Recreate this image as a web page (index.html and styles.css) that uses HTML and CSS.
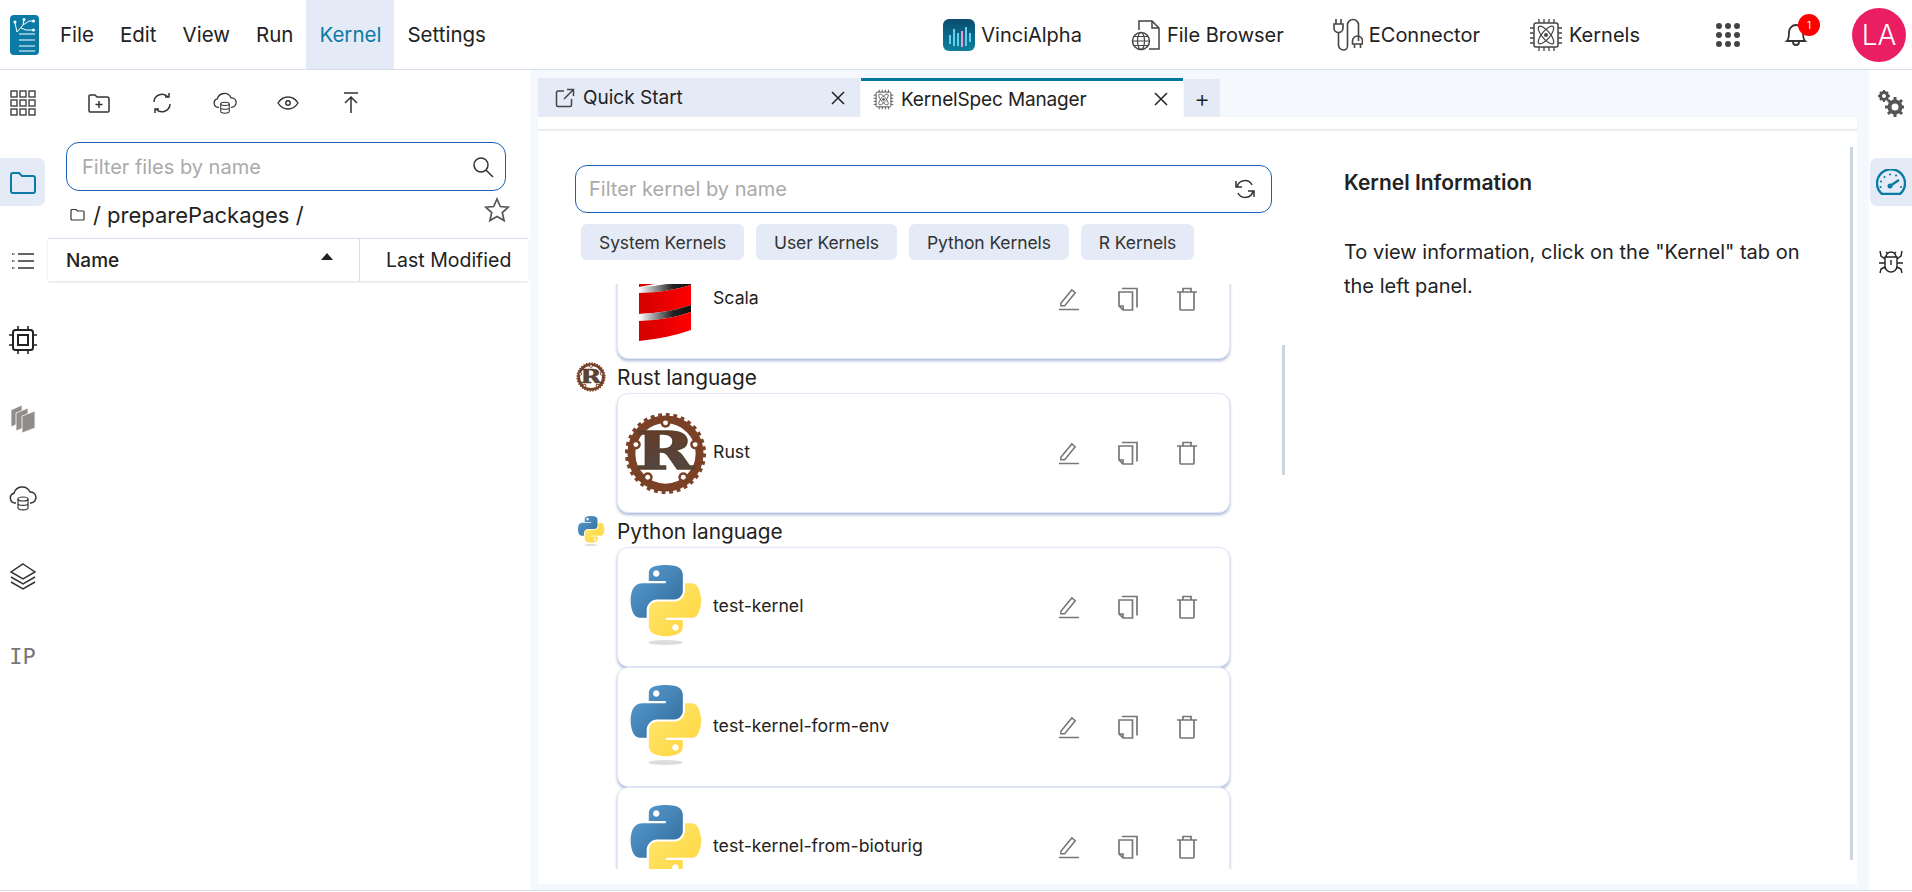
FILE: index.html
```html
<!DOCTYPE html>
<html>
	<head>
		<meta charset="utf-8">
		<title>KernelSpec Manager</title>
		<link rel="stylesheet" href="styles.css">
	</head>
	<body>
		<svg class="defs" width="0" height="0">
			<defs>
				<linearGradient id="py_blue" x1="0" y1="0" x2="1" y2="1"><stop offset="0" stop-color="#5a9fd4"/><stop offset="1" stop-color="#306998"/></linearGradient>
				<linearGradient id="py_yellow" x1="0" y1="0" x2="1" y2="1"><stop offset="0" stop-color="#ffe873"/><stop offset="1" stop-color="#ffd43b"/></linearGradient>
				<linearGradient id="rust_r" x1="0" y1="0" x2="0" y2="1"><stop offset="0" stop-color="#6b3a22"/><stop offset="1" stop-color="#4a4a4a"/></linearGradient>
				<linearGradient id="scala_red" x1="0" y1="0" x2="1" y2="0"><stop offset="0" stop-color="#d40000"/><stop offset="1" stop-color="#ff0000"/></linearGradient>
				<linearGradient id="scala_dark" x1="0" y1="0" x2="1" y2="0"><stop offset="0" stop-color="#ffffff"/><stop offset=".35" stop-color="#888"/><stop offset=".65" stop-color="#222"/><stop offset="1" stop-color="#111"/></linearGradient>
				<symbol id="python" viewBox="0 0 110 126">
					<path fill="url(#py_blue)" fill-rule="evenodd" d="M54.919 0.001c-4.584.022-8.961.413-12.813 1.095C30.76 3.099 28.7 7.295 28.7 15.032v10.219h26.813v3.406H18.638c-7.793 0-14.616 4.684-16.75 13.594-2.462 10.213-2.571 16.586 0 27.25 1.906 7.938 6.458 13.594 14.25 13.594h9.219v-12.25c0-8.85 7.657-16.656 16.75-16.656h26.781c7.454 0 13.406-6.138 13.406-13.625v-25.531c0-7.266-6.13-12.725-13.406-13.937C64.282.328 59.502-.02 54.919.001zm-14.5 8.219c2.77 0 5.031 2.299 5.031 5.125 0 2.816-2.262 5.094-5.031 5.094-2.78 0-5.031-2.278-5.031-5.094 0-2.826 2.251-5.125 5.031-5.125z"/>
					<path fill="url(#py_yellow)" fill-rule="evenodd" d="M85.638 28.657v11.906c0 9.231-7.826 17-16.75 17H42.106c-7.336 0-13.406 6.278-13.406 13.625v25.531c0 7.266 6.319 11.54 13.406 13.625 8.487 2.496 16.626 2.947 26.781 0 6.75-1.954 13.406-5.888 13.406-13.625v-10.219H55.513v-3.406h40.188c7.793 0 10.696-5.436 13.406-13.594 2.8-8.399 2.68-16.476 0-27.25-1.926-7.757-5.604-13.594-13.406-13.594h-10.063zm-15.063 64.656c2.78 0 5.031 2.278 5.031 5.094 0 2.826-2.252 5.125-5.031 5.125-2.77 0-5.031-2.299-5.031-5.125 0-2.816 2.262-5.094 5.031-5.094z"/>
					<ellipse cx="55" cy="122" rx="27" ry="4" fill="#ddd"/>
				</symbol>
				<symbol id="rust" viewBox="0 0 84 84">
					<circle cx="42" cy="42" r="34.500" fill="none" stroke="#7a4126" stroke-width="8"/>
					<circle cx="42" cy="42" r="38.500" fill="none" stroke="#7a4126" stroke-width="5" stroke-dasharray="3.780 3.780"/>
					<g fill="#7a4126"><circle cx="42" cy="11" r="5"/><circle cx="12" cy="33" r="5"/><circle cx="72" cy="33" r="5"/><circle cx="24" cy="66" r="5"/><circle cx="60" cy="66" r="5"/></g>
					<g fill="#fff"><circle cx="42" cy="11" r="2.500"/><circle cx="12" cy="33" r="2.500"/><circle cx="72" cy="33" r="2.500"/><circle cx="24" cy="66" r="2.500"/><circle cx="60" cy="66" r="2.500"/></g>
					<text x="12" y="58" textLength="59" lengthAdjust="spacingAndGlyphs" font-family="DejaVu Serif" font-weight="700" font-size="52" fill="url(#rust_r)" stroke="#57402f" stroke-width="1.400">R</text>
				</symbol>
				<symbol id="edit" viewBox="0 0 24 24"><path d="M4 16.500 15.500 2.500l3.500 3L8 19H4z M2 23h21" fill="none" stroke="#777" stroke-width="1.600"/></symbol>
				<symbol id="copy" viewBox="0 0 22 24"><path d="M5 1.500h15v19 M2 5h13.500v18H6l-4-4z M2 19h4v4" fill="none" stroke="#777" stroke-width="1.700"/></symbol>
				<symbol id="trash" viewBox="0 0 22 24"><path d="M1 5h20M4 5v17a1 1 0 0 0 1 1h12a1 1 0 0 0 1-1V5M7 5V1.500h8V5" fill="none" stroke="#777" stroke-width="1.700"/></symbol>
				<symbol id="cloud_db" viewBox="0 0 28 28"><path d="M7 19H6a5 5 0 0 1-1-9.800A8.500 8.500 0 0 1 21 8a5.500 5.500 0 0 1 1 11h-1" fill="none" stroke="#333" stroke-width="1.500"/><ellipse cx="14" cy="15" rx="5" ry="2" fill="none" stroke="#333" stroke-width="1.200"/><path d="M9 15v9c0 2.500 10 2.500 10 0v-9M9 19.500c0 2.500 10 2.500 10 0" fill="none" stroke="#333" stroke-width="1.200"/></symbol>
				<symbol id="chip_atom" viewBox="0 0 34 34"><rect x="5" y="5" width="24" height="24" rx="2" fill="none" stroke="#444" stroke-width="1.500"/><path d="M10 1v4M15 1v4M20 1v4M25 1v4M10 29v4M15 29v4M20 29v4M25 29v4M1 10h4M1 15h4M1 20h4M1 25h4M29 10h4M29 15h4M29 20h4M29 25h4" stroke="#444" stroke-width="1.300"/><ellipse cx="17" cy="17" rx="4" ry="11" transform="rotate(40 17 17)" fill="none" stroke="#444" stroke-width="1.200"/><ellipse cx="17" cy="17" rx="4" ry="11" transform="rotate(-40 17 17)" fill="none" stroke="#444" stroke-width="1.200"/><circle cx="17" cy="17" r="2" fill="#444"/></symbol>
			</defs>
		</svg>

		<header class="topbar">
			<svg class="logo" viewBox="0 0 29 40">
				<rect width="29" height="40" rx="4" fill="#0b7aa5"/>
				<path d="M7 17 13 10 14 5M13 10l6-4h4M11 13l5 2h7M7 17 5 8" fill="none" stroke="#fff" stroke-width="1"/>
				<circle cx="14" cy="4.500" r="1.500" fill="#fff"/><circle cx="23.500" cy="6" r="1.500" fill="#fff"/><circle cx="23.500" cy="15" r="1.500" fill="#fff"/><circle cx="5" cy="7" r="1.500" fill="#fff"/>
				<path d="M9 19h16M9 25h16M9 31h16M9 36h16" fill="none" stroke="#fff" stroke-width="1.100"/>
			</svg>
			<nav class="menu">
				<a class="menu_item">File</a>
				<a class="menu_item">Edit</a>
				<a class="menu_item">View</a>
				<a class="menu_item">Run</a>
				<a class="menu_item menu_active">Kernel</a>
				<a class="menu_item">Settings</a>
			</nav>
			<nav class="apps">
				<a class="app_link">
					<svg width="32" height="32" viewBox="0 0 32 32">
						<defs><linearGradient id="vinci_bg" x1="0" y1="0" x2="0" y2="1"><stop offset="0" stop-color="#0a4c6e"/><stop offset="1" stop-color="#0f7f9e"/></linearGradient></defs>
						<rect width="32" height="32" rx="6" fill="url(#vinci_bg)"/>
						<path d="M7 16v9M11 10v17M15 14v13M23 8v19M27 14v9" stroke="#5fd0ee" stroke-width="2"/>
						<path d="M19 12v16" stroke="#f09ac8" stroke-width="2"/>
					</svg>
					VinciAlpha
				</a>
				<a class="app_link">
					<svg width="30" height="32" viewBox="0 0 30 32">
						<path d="M8 11V2h13l7 7v21H18M21 2v7h7" fill="none" stroke="#444" stroke-width="1.500"/>
						<circle cx="10" cy="22" r="8.500" fill="#fff" stroke="#444" stroke-width="1.500"/>
						<ellipse cx="10" cy="22" rx="3.500" ry="8.500" fill="none" stroke="#444" stroke-width="1.200"/>
						<path d="M1.500 22h17M3 17.500h14M3 26.500h14" stroke="#444" stroke-width="1.200"/>
					</svg>
					File Browser
				</a>
				<a class="app_link">
					<svg width="30" height="34" viewBox="0 0 30 34">
						<path d="M3 1v5M8 1v5M1 6h9v4a4 4 0 0 1-9 0zM5.500 14v13a5 5 0 0 0 5 5h0a4 4 0 0 0 4-4V7a5.500 5.500 0 0 1 11 0v16" fill="none" stroke="#444" stroke-width="1.600"/>
						<path d="M20 27a5 5 0 0 1 10 0v3H20zM22 30v4M28 30v4" fill="none" stroke="#444" stroke-width="1.600" transform="translate(-.5 -4)"/>
					</svg>
					EConnector
				</a>
				<a class="app_link">
					<svg width="34" height="34"><use href="#chip_atom"/></svg>
					Kernels
				</a>
			</nav>
			<div class="dots">
				<i></i><i></i><i></i><i></i><i></i><i></i><i></i><i></i><i></i>
			</div>
			<div class="bell">
				<svg width="24" height="28" viewBox="0 0 24 28">
					<path d="M3 20c2-2 2-5 2-9a7 7 0 0 1 14 0c0 4 0 7 2 9zM9 21a3 3 0 0 0 6 0" fill="none" stroke="#333" stroke-width="1.800"/>
				</svg>
				<span class="badge">1</span>
			</div>
			<div class="avatar">LA</div>
		</header>

		<div class="app">
			<aside class="side">
				<a class="side_btn">
					<svg width="26" height="26" viewBox="0 0 26 26" fill="none" stroke="#333" stroke-width="1.300">
						<rect x="1" y="1" width="6" height="6"/><rect x="10" y="1" width="6" height="6"/><rect x="19" y="1" width="6" height="6"/>
						<rect x="1" y="10" width="6" height="6"/><rect x="10" y="10" width="6" height="6"/><rect x="19" y="10" width="6" height="6"/>
						<rect x="1" y="19" width="6" height="6"/><rect x="10" y="19" width="6" height="6"/><rect x="19" y="19" width="6" height="6"/>
					</svg>
				</a>
				<a class="side_btn side_active">
					<svg width="26" height="24" viewBox="0 0 26 24"><path d="M1 5a2 2 0 0 1 2-2h6l3 3h11a2 2 0 0 1 2 2v13a2 2 0 0 1-2 2H3a2 2 0 0 1-2-2z" fill="none" stroke="#0b7aa5" stroke-width="2"/></svg>
				</a>
				<a class="side_btn">
					<svg width="22" height="18" viewBox="0 0 22 18"><path d="M6 2h16M6 9h16M6 16h16" stroke="#333" stroke-width="1.500"/><path d="M0 2h3M0 9h3M0 16h3" stroke="#333" stroke-width="1.500" stroke-dasharray="1.500 1"/></svg>
				</a>
				<a class="side_btn">
					<svg width="28" height="28" viewBox="0 0 28 28"><rect x="4" y="4" width="20" height="20" rx="2.500" fill="none" stroke="#222" stroke-width="2"/><rect x="9" y="9" width="10" height="10" fill="none" stroke="#222" stroke-width="2"/><path d="M9 0v3M19 0v3M9 25v3M19 25v3M0 9h3M0 19h3M25 9h3M25 19h3" stroke="#222" stroke-width="1.600"/></svg>
				</a>
				<a class="side_btn">
					<svg width="26" height="28" viewBox="0 0 26 28" fill="#908c8a" stroke="#fff" stroke-width=".8"><path d="M1 5 12 0v17L1 22z"/><path d="M6 8 18 3v18L6 26z"/><path d="M12 11 25 6v17l-13 5z"/></svg>
				</a>
				<a class="side_btn"><svg width="28" height="28"><use href="#cloud_db"/></svg></a>
				<a class="side_btn">
					<svg width="26" height="28" viewBox="0 0 26 28" fill="none" stroke="#333" stroke-width="1.500"><path d="M13 1 25 9l-12 7L1 9zM1 14l12 7 12-7M1 19l12 7 12-7"/></svg>
				</a>
				<a class="side_btn side_text">IP</a>
			</aside>

			<section class="files">
				<div class="files_tools">
					<svg width="22" height="22" viewBox="0 0 22 22"><path d="M1 4a1 1 0 0 1 1-1h5l2 2h10a2 2 0 0 1 2 2v12a1 1 0 0 1-1 1H2a1 1 0 0 1-1-1zM11 9v7M7.500 12.500h7" fill="none" stroke="#333" stroke-width="1.500"/></svg>
					<svg width="20" height="22" viewBox="0 0 20 22"><path d="M2 10a8 8 0 0 1 14-5M18 12a8 8 0 0 1-14 5M13 5h4V1M7 17H3v4" fill="none" stroke="#333" stroke-width="1.500"/></svg>
					<svg width="24" height="24"><use href="#cloud_db"/></svg>
					<svg width="22" height="14" viewBox="0 0 22 14"><path d="M1 7c5-8 15-8 20 0-5 8-15 8-20 0z" fill="none" stroke="#333" stroke-width="1.400"/><circle cx="11" cy="7" r="2.200" fill="none" stroke="#333" stroke-width="1.400"/></svg>
					<svg width="16" height="22" viewBox="0 0 16 22"><path d="M1 1h14M8 21V5M2 11l6-6 6 6" fill="none" stroke="#333" stroke-width="1.500"/></svg>
				</div>
				<label class="search">
					<span class="search_hint">Filter files by name</span>
					<svg width="22" height="22" viewBox="0 0 22 22"><circle cx="9" cy="9" r="7" fill="none" stroke="#333" stroke-width="1.500"/><path d="M14 14l7 7" stroke="#333" stroke-width="1.500"/></svg>
				</label>
				<div class="crumbs">
					<svg width="15" height="13" viewBox="0 0 15 13"><path d="M1 2.500a1 1 0 0 1 1-1h4l1.500 1.500h5.500a1 1 0 0 1 1 1v7a1 1 0 0 1-1 1H2a1 1 0 0 1-1-1z" fill="none" stroke="#333" stroke-width="1.200"/></svg>
					<span>/ preparePackages /</span>
					<svg class="star" width="26" height="26" viewBox="0 0 26 26"><path d="M13 2l3.300 7.500 8 .7-6 5.400 1.800 8L13 19.500l-7.100 4.100 1.800-8-6-5.400 8-.7z" fill="none" stroke="#555" stroke-width="1.700"/></svg>
				</div>
				<div class="table_head">
					<div class="col_name">Name<i class="sort"></i></div>
					<div class="col_date">Last Modified</div>
				</div>
			</section>

			<main class="main">
				<div class="tabs">
					<div class="tab">
						<svg width="20" height="20" viewBox="0 0 20 20"><path d="M9 3H3a1.500 1.500 0 0 0-1.500 1.500V17A1.500 1.500 0 0 0 3 18.500h12a1.500 1.500 0 0 0 1.500-1.500v-6M9 11 18 2M12 1.500h6.500V8" fill="none" stroke="#444" stroke-width="1.500"/></svg>
						<span class="tab_name">Quick Start</span>
						<svg class="tab_x" width="14" height="14" viewBox="0 0 14 14"><path d="M1 1l12 12M13 1 1 13" stroke="#222" stroke-width="1.500"/></svg>
					</div>
					<div class="tab tab_active">
						<svg width="21" height="21"><use href="#chip_atom"/></svg>
						<span class="tab_name">KernelSpec Manager</span>
						<svg class="tab_x" width="14" height="14" viewBox="0 0 14 14"><path d="M1 1l12 12M13 1 1 13" stroke="#222" stroke-width="1.500"/></svg>
					</div>
					<div class="tab_add">+</div>
				</div>
				<div class="panel">
					<div class="panel_strip"></div>
					<div class="panel_body">
						<div class="kernels">
							<label class="search search_kernel">
								<span class="search_hint">Filter kernel by name</span>
								<svg width="20" height="22" viewBox="0 0 20 22"><path d="M2 9a8 8 0 0 1 15-2M18 13a8 8 0 0 1-15 2M1 3v6h6M19 19v-6h-6" fill="none" stroke="#333" stroke-width="1.500"/></svg>
							</label>
							<div class="chips">
								<a class="chip">System Kernels</a>
								<a class="chip">User Kernels</a>
								<a class="chip">Python Kernels</a>
								<a class="chip">R Kernels</a>
							</div>
							<div class="kernel_list">
								<div class="card card_scrolled">
									<svg class="card_logo" width="83" height="84" viewBox="0 0 83 84">
										<path d="M15 3 67-6v26L15 30z" fill="url(#scala_red)"/>
										<path d="M15 30Q45 29 67 20v8Q45 35 15 36z" fill="url(#scala_dark)"/>
										<path d="M15 36Q45 35 67 28v20Q45 56 15 57z" fill="url(#scala_red)"/>
										<path d="M15 57Q45 56 67 48v7Q45 63 15 64z" fill="url(#scala_dark)"/>
										<path d="M15 64Q45 63 67 55v18Q45 81 15 84z" fill="url(#scala_red)"/>
									</svg>
									<span class="card_name">Scala</span>
									<div class="card_tools"><svg width="23" height="24"><use href="#edit"/></svg><svg width="22" height="24"><use href="#copy"/></svg><svg width="22" height="24"><use href="#trash"/></svg></div>
								</div>
								<div class="lang"><svg width="30" height="30"><use href="#rust"/></svg><span>Rust language</span></div>
								<div class="card">
									<svg class="card_logo" width="83" height="83"><use href="#rust"/></svg>
									<span class="card_name">Rust</span>
									<div class="card_tools"><svg width="23" height="24"><use href="#edit"/></svg><svg width="22" height="24"><use href="#copy"/></svg><svg width="22" height="24"><use href="#trash"/></svg></div>
								</div>
								<div class="lang"><svg width="30" height="30"><use href="#python"/></svg><span>Python language</span></div>
								<div class="card">
									<svg class="card_logo card_python" width="83" height="80"><use href="#python"/></svg>
									<span class="card_name">test-kernel</span>
									<div class="card_tools"><svg width="23" height="24"><use href="#edit"/></svg><svg width="22" height="24"><use href="#copy"/></svg><svg width="22" height="24"><use href="#trash"/></svg></div>
								</div>
								<div class="card">
									<svg class="card_logo card_python" width="83" height="80"><use href="#python"/></svg>
									<span class="card_name">test-kernel-form-env</span>
									<div class="card_tools"><svg width="23" height="24"><use href="#edit"/></svg><svg width="22" height="24"><use href="#copy"/></svg><svg width="22" height="24"><use href="#trash"/></svg></div>
								</div>
								<div class="card">
									<svg class="card_logo card_python" width="83" height="80"><use href="#python"/></svg>
									<span class="card_name">test-kernel-from-bioturig</span>
									<div class="card_tools"><svg width="23" height="24"><use href="#edit"/></svg><svg width="22" height="24"><use href="#copy"/></svg><svg width="22" height="24"><use href="#trash"/></svg></div>
								</div>
							</div>
							<div class="list_thumb"></div>
						</div>
						<div class="info">
							<h3 class="info_title">Kernel Information</h3>
							<p class="info_text">To view information, click on the "Kernel" tab on the left panel.</p>
						</div>
					</div>
					<div class="panel_thumb"></div>
				</div>
			</main>

			<aside class="side side_right">
				<a class="side_btn">
					<svg width="26" height="28" viewBox="0 0 26 28" fill="#555">
						<circle cx="6" cy="7" r="3.500" fill="none" stroke="#555" stroke-width="3"/>
						<path d="M6 1v2M6 11v2M0 7h2M10 7h2M2 3l1.500 1.500M8.500 9.500 10 11M10 3 8.500 4.500M3.500 9.500 2 11" stroke="#555" stroke-width="2"/>
						<circle cx="17" cy="18" r="5.500" fill="none" stroke="#555" stroke-width="4"/>
						<path d="M17 8v4M17 24v4M7 18h4M23 18h4M10 11l3 3M21 22l3 3M24 11l-3 3M13 22l-3 3" stroke="#555" stroke-width="3"/>
					</svg>
				</a>
				<a class="side_btn side_active">
					<svg width="30" height="26" viewBox="0 0 30 26"><path d="M6 25a14 14 0 1 1 18 0z" fill="none" stroke="#0b7aa5" stroke-width="2.400"/><path d="M14 17 23 11" stroke="#0b7aa5" stroke-width="2.400"/><circle cx="14" cy="17" r="2.500" fill="#0b7aa5"/><path d="M4.500 18h.1M5 12.500h.1M8.500 8h.1M14 5.500h.1M20 6.500h.1M25 18h.1" stroke="#0b7aa5" stroke-width="2" stroke-linecap="round"/></svg>
				</a>
				<a class="side_btn">
					<svg width="26" height="26" viewBox="0 0 26 26" fill="none" stroke="#222" stroke-width="1.400"><path d="M7 9h12v9a6 6 0 0 1-12 0zM8 9a5 5 0 0 1 10 0M13 12v5M8 4l2 2M18 4l-2 2M7 11 3 8 2 3M19 11l4-3 1-5M7 15H1M19 15h6M7 19l-4 2-1 4M19 19l4 2 1 4"/></svg>
				</a>
			</aside>
		</div>
		<footer class="status"></footer>
	</body>
</html>
```
FILE: styles.css
```css
*{
	box-sizing:border-box;
}
body{
	margin:0;
	height:892px;
	overflow:hidden;
	display:flex;
	flex-direction:column;
	font-family:"Inter","Noto Sans",sans-serif;
	color:#222;
	background:#fff;
}
.defs{
	position:absolute;
}
.topbar{
	height:70px;
	flex:none;
	display:flex;
	align-items:center;
	border-bottom:1px solid #d5deea;
	padding-left:10px;
	padding-right:6px;
}
.logo{
	width:29px;
	height:40px;
	margin-top:1px;
}
.menu{
	display:flex;
	height:69px;
	margin-left:8px;
}
.menu_item{
	display:flex;
	align-items:center;
	padding:0 13px;
	font-size:20.5px;
}
.menu_active{
	background:#e5ebf6;
	color:#0b7aa5;
}
.apps{
	display:flex;
	align-items:center;
	gap:49px;
	margin-left:auto;
}
.app_link{
	display:flex;
	align-items:center;
	gap:6px;
	font-size:20px;
}
.dots{
	display:grid;
	grid-template-columns:repeat(3,6px);
	gap:3px;
	margin-left:76px;
}
.dots i{
	width:6px;
	height:6px;
	border-radius:50%;
	background:#444;
}
.bell{
	position:relative;
	margin-left:44px;
	height:28px;
}
.badge{
	position:absolute;
	left:14px;
	top:-7px;
	width:22px;
	height:22px;
	border-radius:50%;
	background:#f00;
	color:#fff;
	font-size:10px;
	line-height:22px;
	text-align:center;
}
.avatar{
	width:54px;
	height:54px;
	margin-left:44px;
	border-radius:50%;
	background:#e91e63;
	color:#fff;
	font-size:28px;
	font-weight:300;
	line-height:54px;
	text-align:center;
}
.app{
	flex:1;
	min-height:0;
	display:flex;
}
.side{
	width:48px;
	flex:none;
	display:flex;
	flex-direction:column;
	gap:31px;
	padding-top:9px;
}
.side_right{
	width:43px;
	padding-left:1px;
}
.side_btn{
	height:48px;
	width:45px;
	display:flex;
	align-items:center;
	justify-content:center;
	border-radius:0 7px 7px 0;
}
.side_right .side_btn{
	width:42px;
	border-radius:7px 0 0 7px;
}
.side_active{
	background:#e5ebf6;
}
.side_text{
	font-family:"DejaVu Sans Mono",monospace;
	font-size:22px;
	color:#777;
}
.files{
	width:482px;
	flex:none;
	display:flex;
	flex-direction:column;
	padding-right:2px;
}
.files_tools{
	height:66px;
	flex:none;
	display:grid;
	grid-template-columns:repeat(5,63px);
	justify-items:center;
	align-items:center;
	padding-left:19px;
}
.search{
	display:flex;
	align-items:center;
	justify-content:space-between;
	height:49px;
	flex:none;
	margin:6px 22px 0 18px;
	padding:0 11px 0 15px;
	border:1px solid #1a5fb4;
	border-radius:13px;
}
.search_hint{
	font-size:20px;
	color:#aaa;
}
.crumbs{
	height:47px;
	flex:none;
	position:relative;
	display:flex;
	align-items:center;
	gap:8px;
	padding:0 0 0 22px;
	font-size:22px;
}
.star{
	position:absolute;
	left:436px;
	top:6px;
}
.table_head{
	height:43px;
	flex:none;
	display:flex;
	align-items:center;
	border-top:1px solid #d5deea;
	box-shadow:0 1px 2px #ddd;
	font-size:19.5px;
}
.col_name{
	width:312px;
	height:100%;
	display:flex;
	align-items:center;
	padding-left:18px;
	border-right:1px solid #d5deea;
	font-size:19px;
	font-weight:500;
	position:relative;
}
.sort{
	position:absolute;
	left:273px;
	top:14px;
	border:6px solid transparent;
	border-top:0;
	border-bottom:7px solid #222;
}
.col_date{
	padding-left:26px;
	white-space:nowrap;
}
.main{
	flex:1;
	min-width:0;
	display:flex;
	flex-direction:column;
	padding:0 12px 6px 8px;
	background:#f5f8fc;
}
.tabs{
	height:47px;
	flex:none;
	display:flex;
	padding-top:8px;
	gap:1px;
}
.tab{
	width:322px;
	display:flex;
	align-items:center;
	gap:8px;
	padding:0 15px 0 17px;
	background:#e5ebf6;
	font-size:19px;
}
.tab_active{
	gap:7px;
	padding-left:12px;
	background:#fff;
	border-top:3px solid #0078a0;
	letter-spacing:-.15px;
}
.tab_x{
	margin-left:auto;
}
.tab_add{
	width:36px;
	display:flex;
	align-items:center;
	justify-content:center;
	margin-top:1px;
	background:#e5ebf6;
	font-size:24px;
	font-weight:300;
}
.panel{
	flex:1;
	min-height:0;
	position:relative;
	background:#fff;
	display:flex;
	flex-direction:column;
}
.panel_strip{
	height:13px;
	flex:none;
	border-bottom:1px solid #e6e6e6;
	box-shadow:0 1px 2px #eee;
}
.panel_thumb{
	position:absolute;
	left:1312px;
	top:30px;
	bottom:24px;
	width:3px;
	background:#ccd6e2;
}
.panel_body{
	flex:1;
	min-height:0;
	display:flex;
	padding:35px 0 0 37px;
}
.kernels{
	width:769px;
	flex:none;
	position:relative;
	display:flex;
	flex-direction:column;
}
.search_kernel{
	width:697px;
	height:48px;
	flex:none;
	margin:0;
	padding:0 16px 0 13px;
	border-radius:12px;
}
.chips{
	flex:none;
	display:flex;
	gap:12px;
	margin:11px 0 24px 6px;
}
.chip{
	height:36px;
	padding:0 18px;
	display:flex;
	align-items:center;
	border-radius:6px;
	background:#e5ebf6;
	font-size:17.5px;
	letter-spacing:-.1px;
	color:#333;
}
.kernel_list{
	height:585px;
	flex:none;
	overflow:hidden;
	padding-bottom:10px;
}
.lang{
	height:34px;
	display:flex;
	align-items:center;
	gap:11px;
	margin-left:1px;
	padding-top:2px;
	font-size:20.8px;
}
.card{
	width:613px;
	height:120px;
	margin-left:42px;
	display:flex;
	align-items:center;
	padding:0 31px 0 6px;
	background:#fff;
	border:1px solid #e0e7f5;
	border-radius:11px;
	box-shadow:0 2px 3px rgba(70,100,170,.45);
}
.card_scrolled{
	margin-top:-45px;
}
.card_logo{
	flex:none;
	margin-right:6px;
}
.card_python{
	margin-bottom:4px;
}
.card_name{
	font-size:17.7px;
	margin-top:-3px;
}
.card_tools{
	display:flex;
	align-items:center;
	gap:37px;
	margin-left:auto;
}
.list_thumb{
	position:absolute;
	left:707px;
	top:180px;
	width:3px;
	height:130px;
	background:#ccd6e2;
}
.info{
	flex:1;
	padding:3px 0 0 0;
}
.info_title{
	margin:0;
	font-size:21px;
	font-weight:600;
	line-height:30px;
}
.info_text{
	width:480px;
	margin:37px 0 0;
	font-size:20px;
	line-height:34px;
}
.status{
	height:2px;
	flex:none;
	border-top:1px solid #d5deea;
}
```
